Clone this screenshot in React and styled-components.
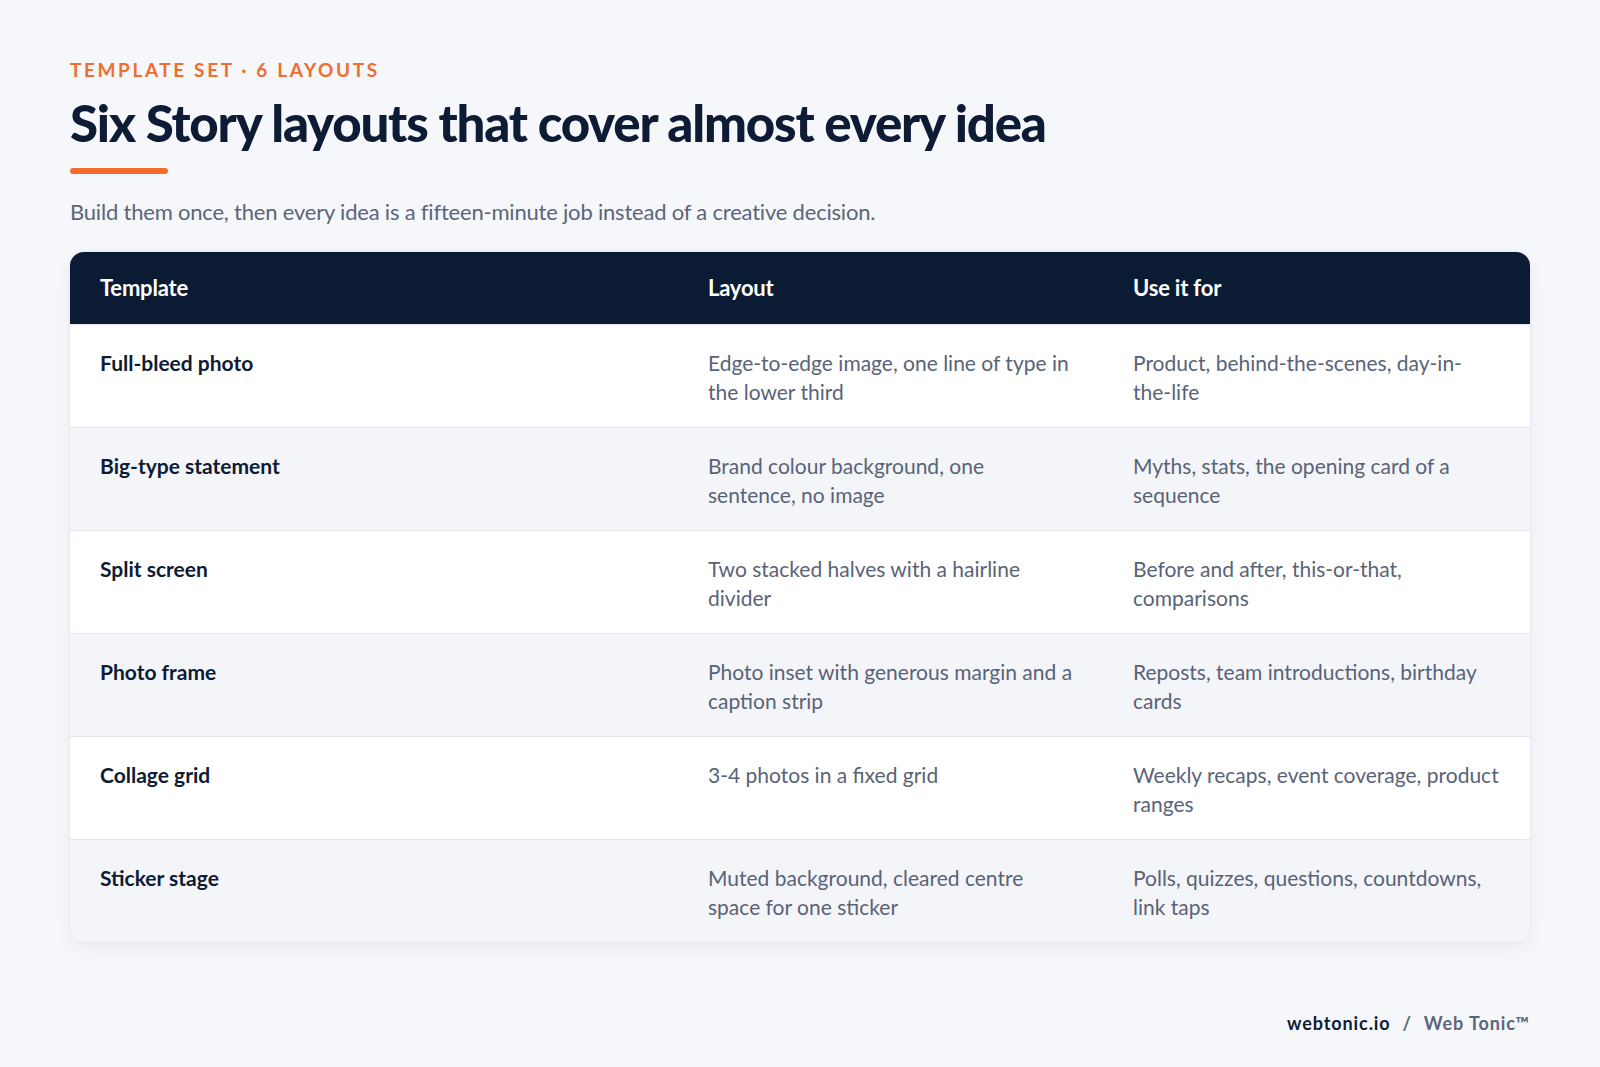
import React from "react";
import styled, { createGlobalStyle } from "styled-components";

const Global = createGlobalStyle`
  html, body { margin: 0; padding: 0; }
  body {
    background: #f5f7fa;
    font-family: Lato, "Noto Sans", "Liberation Sans", sans-serif;
    -webkit-font-smoothing: antialiased;
  }
`;

const Page = styled.div`
  width: 1600px;
  height: 1067px;
  box-sizing: border-box;
  padding: 56px 70px 0;
  display: flex;
  flex-direction: column;
`;

const Eyebrow = styled.div`
  color: #f06d2f;
  font-size: 19px;
  font-weight: 700;
  letter-spacing: 2.6px;
  text-transform: uppercase;
  line-height: 28px;
`;

const Title = styled.h1`
  margin: 8px 0 0;
  color: #0e1b35;
  font-size: 51px;
  font-weight: 900;
  letter-spacing: -1.2px;
  line-height: 62px;
`;

const Accent = styled.div`
  width: 98px;
  height: 6px;
  border-radius: 3px;
  background: #f26c2c;
  margin-top: 14px;
`;

const Lead = styled.p`
  margin: 22px 0 0;
  color: #5b6579;
  font-size: 22px;
  line-height: 32px;
  letter-spacing: -0.2px;
`;

const Table = styled.div`
  margin-top: 24px;
  border-radius: 14px;
  overflow: hidden;
  background: #ffffff;
  box-shadow: 0 0 0 1px #e6e9ef, 0 6px 18px rgba(15, 27, 53, 0.05);
`;

const Row = styled.div`
  display: grid;
  grid-template-columns: 608px 425px 1fr;
  background: ${(p) => (p.$head ? "#0c1b34" : p.$alt ? "#f3f5f9" : "#ffffff")};
  border-top: ${(p) => (p.$head ? "none" : "1px solid #e4e8ee")};
`;

const HeadCell = styled.div`
  padding: 22px 30px;
  color: #ffffff;
  font-size: 22px;
  font-weight: 700;
  line-height: 28px;
  letter-spacing: -0.2px;
`;

const Cell = styled.div`
  padding: 24px 30px 21px;
  font-size: 21px;
  line-height: 28.5px;
  color: ${(p) => (p.$strong ? "#0e1b35" : "#596377")};
  font-weight: ${(p) => (p.$strong ? 700 : 400)};
`;

const Footer = styled.div`
  margin-top: auto;
  margin-bottom: 33px;
  align-self: flex-end;
  font-size: 18px;
  font-weight: 700;
  letter-spacing: 0.9px;
  color: #0e1b35;
  display: flex;
  gap: 12px;
`;

const Muted = styled.span`
  color: #5b6579;
`;

const rows = [
  ["Full-bleed photo", "Edge-to-edge image, one line of type in the lower third", "Product, behind-the-scenes, day-in-the-life"],
  ["Big-type statement", "Brand colour background, one sentence, no image", "Myths, stats, the opening card of a sequence"],
  ["Split screen", "Two stacked halves with a hairline divider", "Before and after, this-or-that, comparisons"],
  ["Photo frame", "Photo inset with generous margin and a caption strip", "Reposts, team introductions, birthday cards"],
  ["Collage grid", "3-4 photos in a fixed grid", "Weekly recaps, event coverage, product ranges"],
  ["Sticker stage", "Muted background, cleared centre space for one sticker", "Polls, quizzes, questions, countdowns, link taps"],
];

export default function App() {
  return (
    <>
      <Global />
      <Page>
        <Eyebrow>Template set · 6 layouts</Eyebrow>
        <Title>Six Story layouts that cover almost every idea</Title>
        <Accent />
        <Lead>Build them once, then every idea is a fifteen-minute job instead of a creative decision.</Lead>
        <Table>
          <Row $head>
            <HeadCell>Template</HeadCell>
            <HeadCell>Layout</HeadCell>
            <HeadCell>Use it for</HeadCell>
          </Row>
          {rows.map((r, i) => (
            <Row key={r[0]} $alt={i % 2 === 1}>
              <Cell $strong>{r[0]}</Cell>
              <Cell>{r[1]}</Cell>
              <Cell>{r[2]}</Cell>
            </Row>
          ))}
        </Table>
        <Footer>
          <span>webtonic.io</span>
          <Muted>/</Muted>
          <Muted>Web Tonic™</Muted>
        </Footer>
      </Page>
    </>
  );
}
